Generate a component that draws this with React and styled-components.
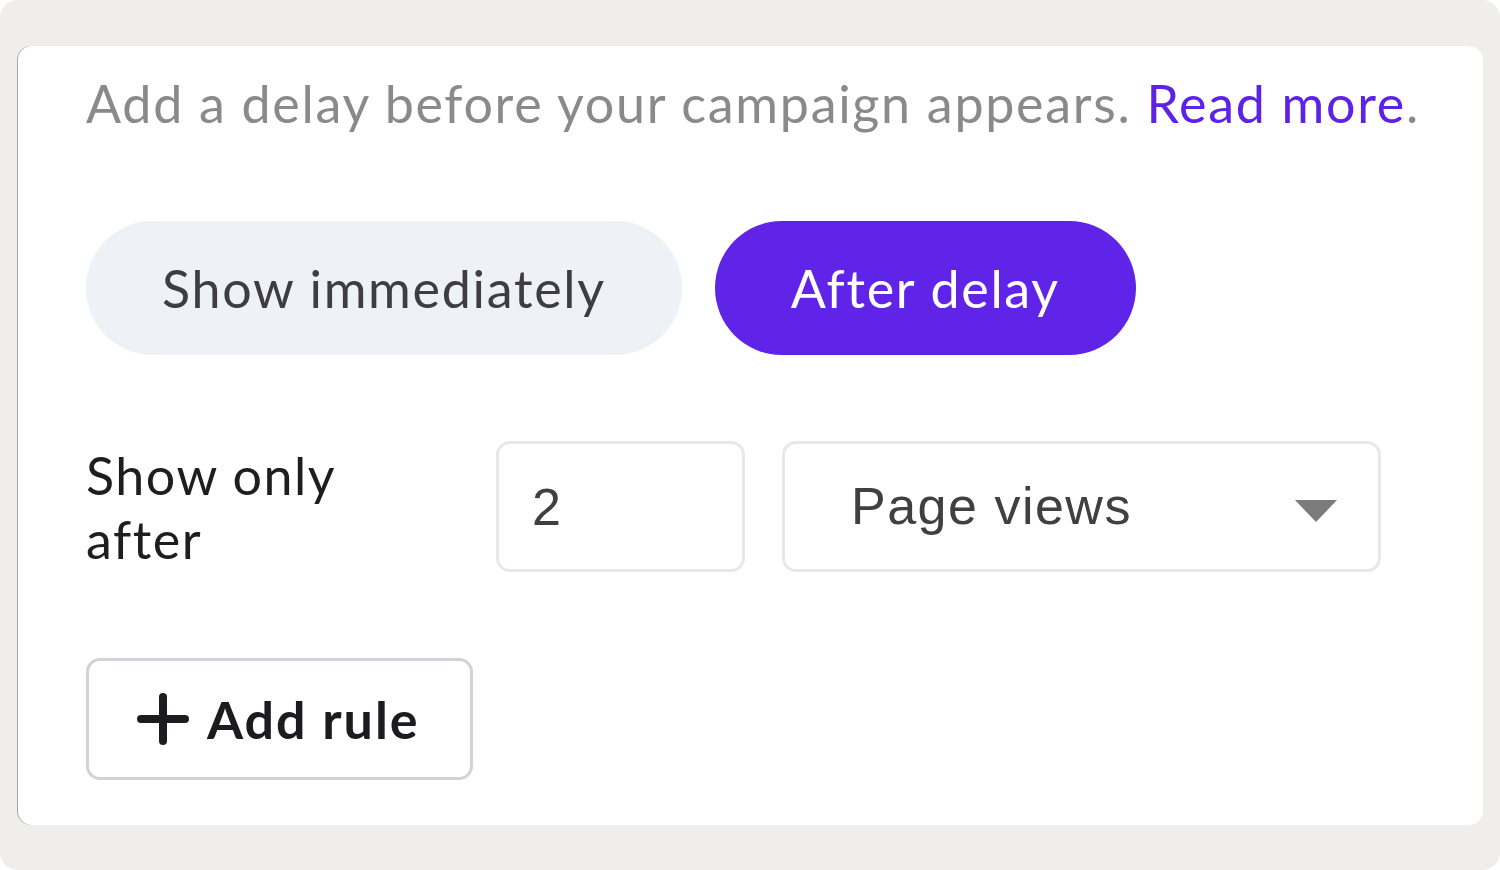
import React, { useState } from "react";
import styled, { createGlobalStyle } from "styled-components";

const GlobalStyle = createGlobalStyle`
  html, body {
    margin: 0;
    padding: 0;
    background: #ffffff;
  }
  body {
    font-family: Lato, "Noto Sans", sans-serif;
  }
`;

const App = () => {
  const [mode, setMode] = useState("delay");
  const [count, setCount] = useState("2");

  return (
    <>
      <GlobalStyle />
      <Frame>
        <Card>
          <Intro>
            Add a delay before your campaign appears. <a href="#read">Read more</a>.
          </Intro>
          <PillRow>
            <Pill $active={mode === "now"} onClick={() => setMode("now")}>
              Show immediately
            </Pill>
            <Pill $active={mode === "delay"} onClick={() => setMode("delay")}>
              After delay
            </Pill>
          </PillRow>
          <RuleRow>
            <RuleLabel>Show only after</RuleLabel>
            <CountInput
              value={count}
              onChange={(e) => setCount(e.target.value)}
            />
            <SelectBox>
              <span>Page views</span>
              <svg width="42" height="22" viewBox="0 0 42 22">
                <path d="M0 0 H42 L21 22 Z" fill="#7b7b7b" />
              </svg>
            </SelectBox>
          </RuleRow>
          <AddButton>
            <svg width="52" height="52" viewBox="0 0 52 52">
              <path
                d="M26 4 V48 M4 26 H48"
                stroke="#1b1b20"
                strokeWidth="8"
                strokeLinecap="round"
              />
            </svg>
            Add rule
          </AddButton>
        </Card>
      </Frame>
    </>
  );
};

const Frame = styled.div`
  width: 1500px;
  height: 870px;
  box-sizing: border-box;
  background: #efeeeb;
  border-radius: 18px;
  padding: 46px 17px 45px 18px;
`;

const Card = styled.div`
  height: 100%;
  box-sizing: border-box;
  background: #ffffff;
  border-radius: 14px;
  box-shadow: -1px 0 0 #a9a9a9;
  padding: 19px 0 0 68px;
  display: flex;
  flex-direction: column;
  align-items: flex-start;
`;

const Intro = styled.p`
  margin: 0;
  font-size: 52px;
  line-height: 76px;
  color: #8a8a8c;
  letter-spacing: 1.7px;

  a {
    color: #5d22e6;
    text-decoration: none;
  }
`;

const PillRow = styled.div`
  display: flex;
  gap: 33px;
  margin-top: 80px;
`;

const Pill = styled.button`
  height: 134px;
  border: none;
  border-radius: 67px;
  padding: 0 76px;
  font-family: inherit;
  font-size: 52px;
  letter-spacing: 1.7px;
  cursor: pointer;
  background: ${({ $active }) => ($active ? "#6023e8" : "#eef1f6")};
  color: ${({ $active }) => ($active ? "#ffffff" : "#3d3d42")};
`;

const RuleRow = styled.div`
  display: flex;
  align-items: flex-start;
  margin-top: 86px;
`;

const RuleLabel = styled.div`
  width: 300px;
  margin-right: 110px;
  padding-top: 2px;
  font-size: 52px;
  line-height: 64px;
  letter-spacing: 1.5px;
  color: #1d1d22;
`;

const CountInput = styled.input`
  width: 249px;
  height: 131px;
  box-sizing: border-box;
  border: 3px solid #e8e8e8;
  border-radius: 14px;
  padding: 0 0 0 33px;
  font-family: "Liberation Sans", Arial, sans-serif;
  font-size: 52px;
  color: #404040;
  outline: none;
`;

const SelectBox = styled.div`
  width: 599px;
  height: 131px;
  margin-left: 37px;
  box-sizing: border-box;
  border: 3px solid #e8e8e8;
  border-radius: 14px;
  padding: 0 41px 0 66px;
  display: flex;
  align-items: center;
  justify-content: space-between;
  font-family: "Liberation Sans", Arial, sans-serif;
  font-size: 52px;
  letter-spacing: 1.5px;
  color: #404040;

  span {
    margin-top: -2px;
  }

  svg {
    margin-top: 8px;
  }
`;

const AddButton = styled.button`
  margin-top: 86px;
  width: 387px;
  height: 122px;
  box-sizing: border-box;
  border: 3px solid #d2d2da;
  border-radius: 14px;
  background: #ffffff;
  display: flex;
  align-items: center;
  gap: 18px;
  padding: 0 0 0 48px;
  font-family: inherit;
  font-weight: 700;
  font-size: 52px;
  letter-spacing: 2px;
  color: #1b1b20;
  cursor: pointer;
`;

export default App;
